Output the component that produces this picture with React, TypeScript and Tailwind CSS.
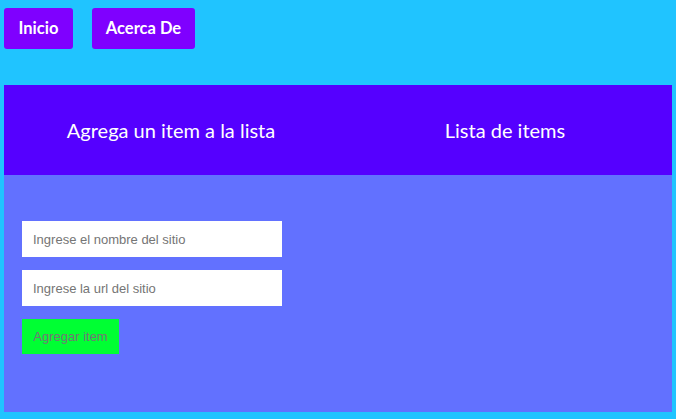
import React from 'react';

const App = () => {
  return (
    <div className="min-h-[419px] bg-[#20c4ff] px-1 pt-2 pb-[7px] font-['Lato',sans-serif]">
      <nav className="flex gap-[19px]">
        <button className="h-[41px] w-[69px] rounded-[3px] bg-[#7f00ff] text-[16.5px] font-bold text-white">
          Inicio
        </button>
        <button className="h-[41px] w-[103px] rounded-[3px] bg-[#7f00ff] text-[16.5px] font-bold text-white">
          Acerca De
        </button>
      </nav>
      <main className="mt-[36px] grid grid-cols-2">
        <div className="flex h-[90px] items-center justify-center bg-[#5500ff] text-[20px] text-white">
          Agrega un item a la lista
        </div>
        <div className="flex h-[90px] items-center justify-center bg-[#5500ff] text-[20px] text-white">
          Lista de items
        </div>
        <div className="flex h-[237px] flex-col gap-[13px] bg-[#6271ff] px-[18px] pt-[46px] font-['Liberation_Sans',sans-serif]">
          <input
            className="h-[36px] w-[260px] bg-white px-[11px] text-[13px] text-gray-700 outline-none placeholder:text-[#757575]"
            placeholder="Ingrese el nombre del sitio"
          />
          <input
            className="h-[36px] w-[260px] bg-white px-[11px] text-[13px] text-gray-700 outline-none placeholder:text-[#757575]"
            placeholder="Ingrese la url del sitio"
          />
          <button className="h-[35px] w-[97px] bg-[#00ff33] text-[13px] text-[#757575]">
            Agregar item
          </button>
        </div>
        <div className="h-[237px] bg-[#6271ff]" />
      </main>
    </div>
  );
};

export default App;
